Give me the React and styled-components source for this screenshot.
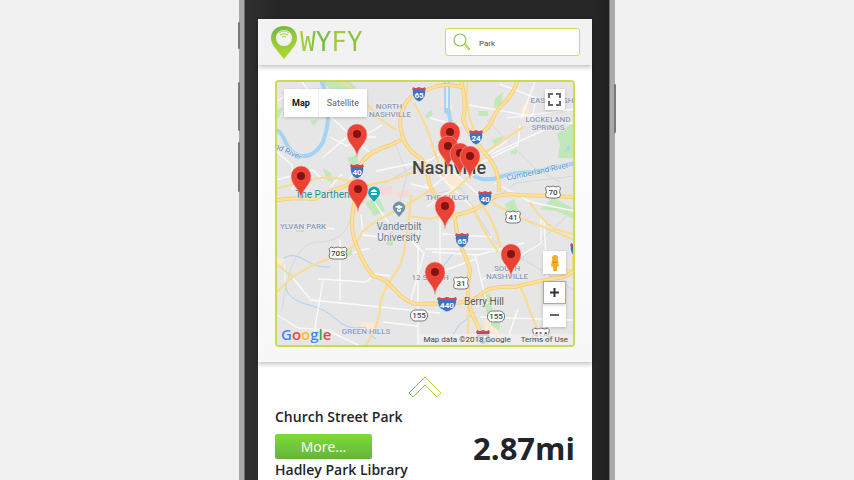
import React from "react";
import styled, { createGlobalStyle, css } from "styled-components";

const GlobalStyle = createGlobalStyle`
  * { box-sizing: border-box; }
  body {
    margin: 0;
    background: #f1f1f1;
    color: #212529;
    font-family: "Open Sans", "Noto Sans", sans-serif;
  }
  h2, p { margin: 0; }
`;

const Page = styled.main`
  display: flex;
  justify-content: center;
  height: 100vh;
  overflow: hidden;
`;

const Phone = styled.div`
  position: relative;
  width: 100%;
  max-width: 376px;
  min-height: 100%;
  padding: 19px 18px 0 14px;
  border: solid #a9a9ab;
  border-width: 0 5px;
  background: linear-gradient(90deg, #303030, #262626 10%, #262626 96%, #202020);
  background-clip: padding-box;
  box-shadow: inset 1px 0 0 #707074, inset -1px 0 0 #707074;
`;

const SideKey = styled.span`
  position: absolute;
  width: 2px;
  border-radius: 1px;
  background: #77777c;
  top: ${(p) => p.$top}px;
  height: ${(p) => p.$length}px;
  ${(p) => (p.$right ? css`right: -6px;` : css`left: -6px;`)}
`;

const Screen = styled.div`
  display: flex;
  flex-direction: column;
  min-height: 100%;
  background: #fff;
`;

const Header = styled.header`
  position: relative;
  z-index: 1;
  display: flex;
  align-items: center;
  justify-content: space-between;
  height: 46px;
  padding: 0 12px;
  background: #f2f2f2;
  box-shadow: 0 2px 5px rgba(0, 0, 0, 0.25);
`;

const Brand = styled.a`
  display: flex;
  align-items: center;
  gap: 2px;
  text-decoration: none;
`;

const BrandName = styled.span`
  font: 26px/30px "DejaVu Sans Mono", monospace;
  color: transparent;
  background: linear-gradient(100deg, #b8d430, #6fb944 35%, #a8cf37 60%, #7fbf42 80%, #b8d430);
  background-clip: text;
`;

const SearchBox = styled.label`
  display: flex;
  align-items: center;
  gap: 8px;
  width: 135px;
  height: 28px;
  padding: 0 7px;
  border: 1px solid #c8de62;
  border-radius: 3px;
  background: #fff;
`;

const SearchInput = styled.input`
  flex: 1;
  min-width: 0;
  padding: 3px 0 0;
  border: 0;
  outline: 0;
  background: transparent;
  color: #495057;
  font: 8px/12px Roboto, sans-serif;
`;

const MapSection = styled.section`
  position: relative;
  padding: 15px 17px;
  background: linear-gradient(#fff, #f7f7f7);
  box-shadow: 0 2px 5px rgba(0, 0, 0, 0.25);
`;

const MapFrame = styled.div`
  position: relative;
  aspect-ratio: 300 / 267;
  border: 2px solid #c9dc51;
  border-radius: 4px;
  overflow: hidden;
  background: #e5e5e5;
`;

const MapDrawing = styled.svg`
  display: block;
  width: 100%;
  height: 100%;
`;

const MapTypes = styled.div`
  position: absolute;
  top: 7px;
  left: 7px;
  display: flex;
  background: #fff;
  box-shadow: 0 1px 3px rgba(0, 0, 0, 0.2);
`;

const MapType = styled.button`
  height: 28px;
  padding: 0 8px;
  border: 0;
  border-left: ${(p) => (p.$active ? "0" : "1px solid #eee")};
  background: #fff;
  color: ${(p) => (p.$active ? "#111" : "#666")};
  font: ${(p) => (p.$active ? 700 : 400)} 9px/28px Roboto, sans-serif;
`;

const MapControls = styled.div`
  position: absolute;
  top: 7px;
  bottom: 18px;
  right: 7px;
  display: flex;
  flex-direction: column;
  align-items: center;
`;

const MapButton = styled.button`
  position: relative;
  z-index: ${(p) => (p.$focus ? 1 : 0)};
  display: grid;
  place-items: center;
  width: ${(p) => (p.$small ? "20px" : "23px")};
  height: ${(p) => (p.$small ? "21px" : "23px")};
  padding: 0;
  border: ${(p) => (p.$focus ? "1px solid #e5a23c" : "0")};
  background: #fff;
  box-shadow: 0 1px 3px rgba(0, 0, 0, 0.2);
  margin-top: ${(p) => (p.$push ? "auto" : p.$spaced ? "7px" : "0")};
`;

const Attribution = styled.div`
  position: absolute;
  right: 0;
  bottom: 0;
  display: flex;
  gap: 10px;
  padding: 0 5px;
  background: rgba(240, 240, 240, 0.75);
  color: #444;
  font: 8px/11px Roboto, sans-serif;
`;

const TermsLink = styled.a`
  color: inherit;
  text-decoration: none;
`;

const GoogleMark = styled.span`
  position: absolute;
  left: 4px;
  bottom: 1px;
  font: 600 15px/20px "Open Sans", sans-serif;
  text-shadow: 0 0 1px #fff;
`;

const Letter = styled.span`
  color: ${(p) => p.$color};
`;

const Results = styled.section`
  display: flex;
  flex-direction: column;
  padding: 14px 17px;
`;

const Collapse = styled.button`
  align-self: center;
  display: block;
  height: 22px;
  padding: 0;
  border: 0;
  background: none;
`;

const ResultRow = styled.article`
  display: flex;
  flex-direction: column;
  padding-top: ${(p) => (p.$first ? "8px" : "0")};
`;

const ResultTitle = styled.h2`
  font-size: 14px;
  font-weight: 600;
  line-height: 22px;
`;

const ResultDetails = styled.div`
  display: flex;
  align-items: flex-end;
  justify-content: space-between;
  height: 31px;
`;

const MoreButton = styled.button`
  width: 97px;
  height: 25px;
  padding: 0;
  border: 0;
  border-radius: 2px;
  background: linear-gradient(#7bdc38, #66b33c);
  color: #fff;
  font: 14px/25px "Open Sans", sans-serif;
`;

const Distance = styled.p`
  font-size: 31px;
  font-weight: 700;
  line-height: 22px;
`;

const highways = [
  "M274 201Q290 197 315 199Q325 193 340 188T357 175Q360 155 385 147Q402 141 403 137Q398 125 402 112Q407 94 427 90Q442 82 462 87",
  "M403 137Q406 148 416 155Q428 163 428 178Q431 195 446 207L455 218Q457 239 462 249T470 270Q464 298 474 318L488 348",
  "M455 215Q475 212 486 202T520 195L576 197",
  "M461 80Q467 104 463 119Q467 132 476 142L489 158Q500 171 499 192",
  "M518 80Q513 94 505 102Q495 111 491 123Q486 132 475 136",
  "M358 180Q357 191 353 210Q350 232 357 247Q364 265 373 276Q386 279 392 287Q407 304 418 304L457 303Q475 302 485 291Q492 286 515 287Q542 280 563 277Q570 275 576 269",
];

const mainRoads = [
  "M339 80Q362 93 376 116L396 130",
  "M468 80Q464 105 472 124L477 139",
  "M274 262L293 277Q306 267 330 258L349 250Q359 242 362 232Q379 217 401 209L430 190",
  "M274 295Q285 283 293 277",
  "M411 195Q409 224 405 246Q402 266 392 278Q382 291 380 306Q380 325 364 347",
  "M472 205Q480 226 498 252",
  "M480 202Q497 225 500 247",
  "M490 201Q514 216 533 223T576 241",
  "M530 202Q540 219 555 229L576 235",
  "M520 287Q527 300 530 312L540 335",
  "M468 299L468 347",
  "M414 103Q428 126 434 151L444 177",
  "M274 189L315 179Q335 174 355 184",
  "M355 187Q385 184 413 172",
  "M408 216L430 219L450 213",
  "M448 196L470 176L487 151L523 127",
  "M553 267L575 271M573 247V273",
];

const streets = [
  "M276 151L292 165L293 190M302 82L321 108L370 153L350 178M330 137L347 146L382 125",
  "M322 158L347 137L376 137M365 188L388 222M342 174L330 187",
  "M340 240V300M277 315L298 328L327 330L360 346M293 278L311 300L440 313M318 279L366 282L376 274L390 276M323 280L312 346",
  "M361 215L363 235L410 240M410 240L424 253L410 303M418 230V347M383 322L417 326M440 210V265M425 249H510M432 275L476 259",
  "M447 82V108M430 118L461 126M469 105L575 124M507 118L575 109M520 125L518 145L480 163M492 154L544 130",
  "M420 197L470 156M427 207L482 169M425 184L456 216M439 175L472 207M447 166L480 196M411 184L428 188M495 183L531 202L574 211",
  "M442 234L492 237M432 252L478 255L524 243M475 255L487 304M482 280L541 243V218M544 220L547 277M480 317L575 320M518 309L505 346M552 286L550 331",
  "M500 84L536 98L531 124M535 82L521 118M508 140L482 158M455 144L430 160L376 171",
  "M277 101L298 89L323 97M276 180L313 170L323 180M300 226L335 229M353 253L369 248M285 264V285",
];

const parks = [
  "M323 82L350 82L356 87L346 96L332 91Z",
  "M276 110L283 107L280 116L276 119Z",
  "M310 121L318 119L314 126Z",
  "M347 158L357 155L359 165L351 166Z",
  "M323 168L331 173L334 183L327 180Z",
  "M365 202L379 198L385 211L374 216Z",
  "M495 98L503 92L500 109L494 107Z",
  "M479 111H488V116H478Z",
  "M557 134L575 122V152L560 145Z",
  "M492 140L503 136L502 142L494 145Z",
  "M511 151L517 149V154L511 154Z",
  "M560 143L575 140V158L558 158Z",
  "M553 197L571 207L575 219L556 211L541 209Z",
  "M482 293L491 295L493 319L486 311Z",
  "M491 315L501 313L499 331L491 325Z",
  "M345 250L352 247L352 255L346 256Z",
  "M387 241L393 240V246L386 245Z",
  "M296 230H304V232H296Z",
  "M425 115L431 110L433 114L427 119Z",
  "M505 204L514 199L518 210L508 214Z",
];

const labels = [
  { x: 389, y: 109, text: "NORTH" },
  { x: 390, y: 117, text: "NASHVILLE" },
  { x: 552, y: 103, text: "EAST NASH" },
  { x: 548, y: 122, text: "LOCKELAND" },
  { x: 548, y: 130, text: "SPRINGS" },
  { x: 447, y: 200, text: "THE GULCH" },
  { x: 303, y: 229, text: "YLVAN PARK" },
  { x: 430, y: 280, text: "12 SOUTH" },
  { x: 507, y: 271, text: "SOUTH" },
  { x: 507, y: 279, text: "NASHVILLE" },
  { x: 366, y: 334, text: "GREEN HILLS" },
];

const interstates = [
  { x: 419, y: 94, n: "65" },
  { x: 476, y: 137, n: "24" },
  { x: 357, y: 171, n: "40" },
  { x: 485, y: 198, n: "40" },
  { x: 462, y: 240, n: "65" },
  { x: 447, y: 304, n: "440" },
  { x: 483, y: 337, n: "65" },
  { x: 577, y: 250, n: "40" },
];

const routes = [
  { x: 553, y: 192, n: "70", w: 15 },
  { x: 513, y: 217, n: "41", w: 15 },
  { x: 461, y: 283, n: "31", w: 15 },
  { x: 338, y: 253, n: "70S", w: 18 },
  { x: 419, y: 315, n: "155", w: 17, oval: true },
  { x: 496, y: 316, n: "155", w: 17, oval: true },
  { x: 541, y: 334, n: "41A", w: 17 },
];

const pins = [
  [357, 157], [301, 199], [358, 212], [450, 155], [448, 169],
  [460, 176], [470, 179], [445, 229], [511, 277], [435, 295],
];

const MapLabel = styled.text`
  font: ${(p) => p.$weight || 500} ${(p) => p.$size || 8}px Roboto, sans-serif;
  fill: ${(p) => p.$color || "#8d99b6"};
  stroke: ${(p) => (p.$bare ? "none" : "#f0f0f0")};
  stroke-width: 1px;
  paint-order: stroke;
  text-anchor: middle;
`;

function Interstate({ x, y, n }) {
  const w = n.length > 2 ? 10 : 7;
  return (
    <g transform={`translate(${x} ${y})`}>
      <path
        d={`M${-w + 1} -7Q${-w / 2} -5 0 -7Q${w / 2} -5 ${w - 1} -7Q${w + 2} 4 0 8Q${-w - 2} 4 ${-w + 1} -7Z`}
        fill="#3f73c0" stroke="#fff" strokeWidth="0.6"
      />
      <path d={`M${-w + 1} -7Q${-w / 2} -5 0 -7Q${w / 2} -5 ${w - 1} -7L${w} -4H${-w}Z`} fill="#d34a4a" />
      <MapLabel y="4" $size={8} $weight={700} $color="#fff" $bare>{n}</MapLabel>
    </g>
  );
}

function Route({ x, y, n, w, oval }) {
  const h = w / 2;
  return (
    <g transform={`translate(${x} ${y})`}>
      {oval ? (
        <rect x={-h} y="-5" width={w} height="11" rx="5" fill="#fff" stroke="#777" />
      ) : (
        <path
          d={`M${-h} -4L${2 - h} -6Q${-h / 2} -4 0 -6Q${h / 2} -4 ${h - 2} -6L${h} -4Q${h - 2} 0 ${h} 3Q${h} 6 ${h - 4} 6H${4 - h}Q${-h} 6 ${-h} 3Q${2 - h} 0 ${-h} -4Z`}
          fill="#fff" stroke="#777"
        />
      )}
      <MapLabel y="3" $size={8} $color="#444" $bare>{n}</MapLabel>
    </g>
  );
}

function Pin({ x, y }) {
  return (
    <g transform={`translate(${x} ${y})`}>
      <path
        d="M0 0C-1 -11 -10 -13 -10 -23A10 10 0 0 1 10 -23C10 -13 1 -11 0 0Z"
        fill="#ea4335" stroke="#f6b3a8" strokeWidth="0.5"
      />
      <circle cy="-23" r="4" fill="#811411" />
    </g>
  );
}

function CityMap() {
  return (
    <MapDrawing viewBox="277 82 296 263" preserveAspectRatio="xMidYMid slice" role="img" aria-label="Map of parks in Nashville">
      <rect x="270" y="75" width="310" height="280" fill="#e6e6e6" />
      <path d="M438 104L451 102L453 111ZM361 322L375 323L374 332L360 332ZM484 319L500 324L496 342L485 333ZM276 257L285 259L279 268ZM522 106L529 103V117L523 118ZM443 178L453 171L462 182L450 191Z" fill="#fbe9d3" />
      <path d="M425 190L434 188L436 194L427 197ZM377 188L392 186L393 194L381 196ZM396 192L408 190L409 196L398 198Z" fill="#f6d8d8" />
      {parks.map((d) => <path key={d} d={d} fill="#c0e8b9" />)}
      <g fill="none" stroke="#a5d3f5" strokeLinecap="round" strokeLinejoin="round">
        <path d="M321 80Q327 93 328 109T323 142Q314 158 300 156Q290 153 284 139Q280 130 275 130" strokeWidth="4" />
        <path d="M447 82Q445 94 448 108T454 144Q459 165 476 177Q486 182 500 177T533 172L576 163" strokeWidth="4" />
        <path d="M447 82V111" strokeWidth="6" />
        <path d="M317 93L320 88M316 102L319 98M284 258Q292 252 305 260T329 267M286 265Q283 285 288 293T309 305Q326 309 337 320T365 327Q370 336 376 339M565 153L569 145L568 151M452 255L441 269M475 312L458 326L450 341" strokeWidth="1" />
      </g>
      <path d="M282 311Q290 242 318 242T351 216Q360 202 390 180L425 160M425 196L461 188L483 224L495 242L575 291M492 201L516 183L574 176M394 140L407 175L398 209M487 120L536 169L560 182M520 260L569 214" fill="none" stroke="#d6d6d8" />
      <g fill="none" stroke="#fafafa" strokeWidth="1.4">{streets.map((d) => <path key={d} d={d} />)}</g>
      <g fill="none" stroke="#f9dc94" strokeWidth="2.2">{mainRoads.map((d) => <path key={d} d={d} />)}</g>
      <g fill="none" stroke="#f4cd74" strokeWidth="4" strokeLinejoin="round">{highways.map((d) => <path key={d} d={d} />)}</g>
      <g fill="none" stroke="#ffe09a" strokeWidth="2.4" strokeLinejoin="round">{highways.map((d) => <path key={d} d={d} />)}</g>

      {labels.map((l) => <MapLabel key={l.text + l.y} x={l.x} y={l.y}>{l.text}</MapLabel>)}
      <MapLabel x="449" y="174" $size={18} $color="#444">Nashville</MapLabel>
      <MapLabel x="484" y="305" $size={10} $weight={400} $color="#555">Berry Hill</MapLabel>
      <MapLabel x="399" y="230" $size={10} $weight={400} $color="#5f7b8b">Vanderbilt</MapLabel>
      <MapLabel x="399" y="241" $size={10} $weight={400} $color="#5f7b8b">University</MapLabel>
      <MapLabel x="328" y="198" $size={10} $weight={400} $color="#178b98">The Parthenon</MapLabel>
      <MapLabel $color="#4a90d0" $weight={400} transform="translate(287 154) rotate(25)">nd River</MapLabel>
      <MapLabel $color="#4a90d0" $weight={400} transform="translate(538 174) rotate(-12)">Cumberland River</MapLabel>

      {interstates.map((s) => <Interstate key={`${s.x}-${s.y}`} {...s} />)}
      {routes.map((s) => <Route key={`${s.x}-${s.y}`} {...s} />)}

      <path d="M374 202L370 197A6 6 0 1 1 378 197Z" fill="#12a5b5" />
      <path d="M371 191L374 189L377 191V192H371ZM371 193H377V195H371Z" fill="#fff" />
      <path d="M399 217L394 211A6 6 0 1 1 404 211Z" fill="#7093a5" />
      <path d="M395 207L399 205L403 207L399 209ZM397 209V211L399 212L401 211V209L399 210Z" fill="#fff" />

      {pins.map(([x, y]) => <Pin key={`${x}-${y}`} x={x} y={y} />)}
    </MapDrawing>
  );
}

function LogoPin() {
  return (
    <svg width="28" height="34" viewBox="0 0 28 34" aria-hidden="true">
      <defs>
        <linearGradient id="logoPin" x1="0" y1="0" x2="0.2" y2="1">
          <stop offset="0" stopColor="#6eb743" />
          <stop offset="0.5" stopColor="#97c93c" />
          <stop offset="1" stopColor="#a9d62d" />
        </linearGradient>
      </defs>
      <path fillRule="evenodd" fill="url(#logoPin)" d="M14 1C6 1 1 6 1 13C1 19 5 23 14 34C23 23 27 19 27 13C27 6 22 1 14 1ZM14 5A8 8 0 1 1 14 21A8 8 0 1 1 14 5Z" />
      <path d="M9 8Q14 4 19 8M10 10Q14 7 18 10M12 12Q14 10 16 12" fill="none" stroke="#a5cf42" />
    </svg>
  );
}

function SearchIcon() {
  return (
    <svg width="18" height="18" viewBox="0 0 18 18" fill="none" aria-hidden="true">
      <circle cx="7" cy="7" r="6" stroke="#8dc55c" strokeWidth="1.2" />
      <path d="M11 11L12 10L17 16L16 17Z" stroke="#a8cf3c" fill="#d8ec9c" />
    </svg>
  );
}

const googleLetters = [
  ["G", "#4285f4"], ["o", "#ea4335"], ["o", "#fbbc05"], ["g", "#4285f4"], ["l", "#34a853"], ["e", "#ea4335"],
];

export default function App() {
  return (
    <>
      <GlobalStyle />
      <Page>
        <Phone>
          <SideKey $top={22} $length={27} />
          <SideKey $top={82} $length={49} />
          <SideKey $top={142} $length={50} />
          <SideKey $top={84} $length={49} $right />
          <Screen>
            <Header>
              <Brand href="#">
                <LogoPin />
                <BrandName>WYFY</BrandName>
              </Brand>
              <SearchBox>
                <SearchIcon />
                <SearchInput type="text" defaultValue="Park" aria-label="Search" />
              </SearchBox>
            </Header>
            <MapSection>
              <MapFrame>
                <CityMap />
                <MapTypes>
                  <MapType $active>Map</MapType>
                  <MapType>Satellite</MapType>
                </MapTypes>
                <GoogleMark>
                  {googleLetters.map(([c, color], i) => <Letter key={i} $color={color}>{c}</Letter>)}
                </GoogleMark>
                <Attribution>
                  <span>Map data ©2018 Google</span>
                  <TermsLink href="#">Terms of Use</TermsLink>
                </Attribution>
                <MapControls>
                  <MapButton aria-label="Full screen" $small>
                    <svg width="13" height="13" fill="none" stroke="#666" strokeWidth="2">
                      <path d="M1 5V1H5M8 1H12V5M12 8V12H8M5 12H1V8" />
                    </svg>
                  </MapButton>
                  <MapButton aria-label="Street view" $push>
                    <svg width="10" height="16" fill="#f2ae24">
                      <circle cx="5" cy="3" r="3" />
                      <path d="M2 5H8L9 11L7 12V16H3V12L1 11Z" />
                      <path d="M3 6L5 8L7 6V8H3Z" fill="#c98214" />
                    </svg>
                  </MapButton>
                  <MapButton aria-label="Zoom in" $spaced $focus>
                    <svg width="9" height="9" stroke="#333" strokeWidth="2"><path d="M0 4.5H9M4.5 0V9" /></svg>
                  </MapButton>
                  <MapButton aria-label="Zoom out">
                    <svg width="9" height="9" stroke="#666" strokeWidth="2"><path d="M0 4H9" /></svg>
                  </MapButton>
                </MapControls>
              </MapFrame>
            </MapSection>
            <Results>
              <Collapse aria-label="Collapse map">
                <svg width="34" height="22" viewBox="0 0 34 22" fill="none">
                  <defs>
                    <linearGradient id="chevron">
                      <stop offset="0" stopColor="#63b246" />
                      <stop offset="1" stopColor="#cfe02c" />
                    </linearGradient>
                  </defs>
                  <path d="M1 17L17 1L33 17L29 21L17 9L5 21Z" stroke="url(#chevron)" />
                </svg>
              </Collapse>
              <ResultRow $first>
                <ResultTitle>Church Street Park</ResultTitle>
                <ResultDetails>
                  <MoreButton>More...</MoreButton>
                  <Distance>2.87mi</Distance>
                </ResultDetails>
              </ResultRow>
              <ResultRow>
                <ResultTitle>Hadley Park Library</ResultTitle>
              </ResultRow>
            </Results>
          </Screen>
        </Phone>
      </Page>
    </>
  );
}
